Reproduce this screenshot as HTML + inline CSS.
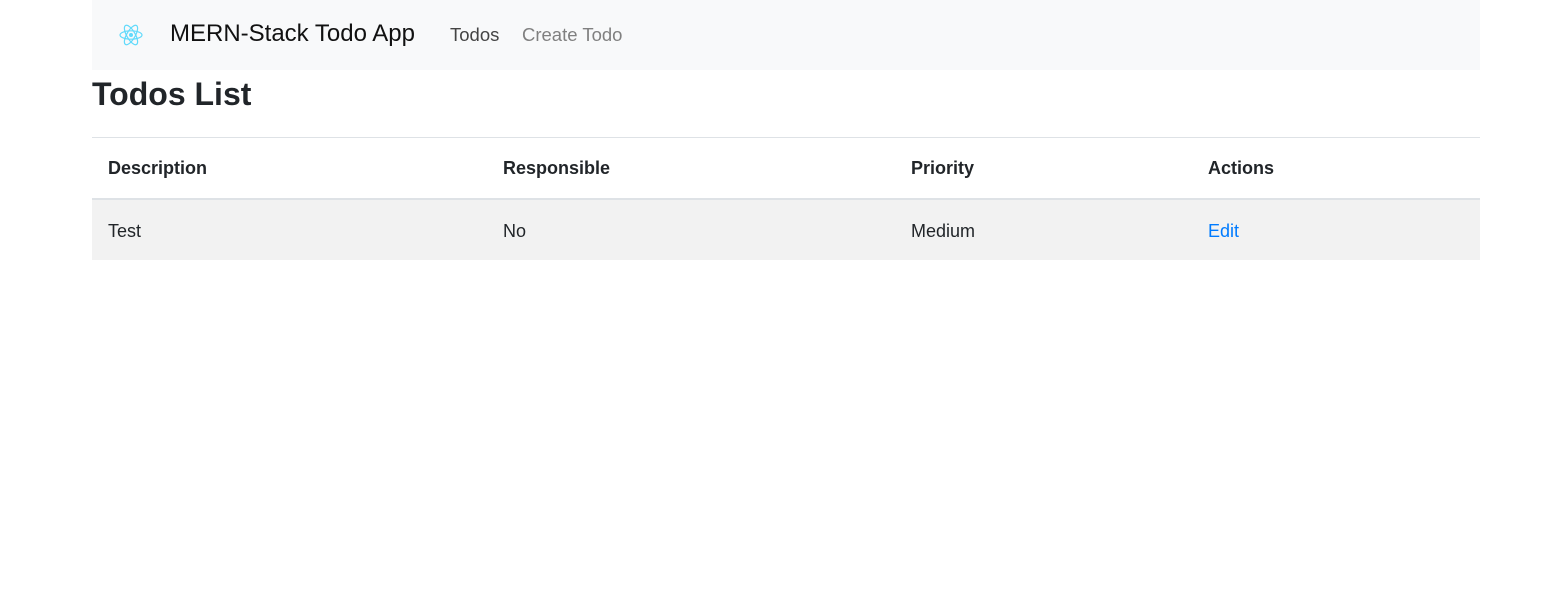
<!DOCTYPE html>
<html><head><style>
body{margin:0;font-family:"Liberation Sans",sans-serif;color:#212529;background:#fff}
.nav{position:absolute;left:92px;top:0;width:1388px;height:70px;background:#f8f9fa}
.brand{position:absolute;left:78px;top:20px;font-size:24px;color:#111;white-space:nowrap}
.l{position:absolute;top:24px;font-size:18.5px;white-space:nowrap}
h1{position:absolute;left:92px;top:72px;margin:0;font-size:32px;font-weight:bold;line-height:44px}
.t{position:absolute;left:92px;top:137px;width:1388px;border-top:1px solid #dee2e6}
.row{position:relative;height:60px;font-size:18px}
.row span{position:absolute;top:21px;white-space:nowrap}
.h{border-bottom:2px solid #dee2e6;font-weight:bold}
.b{background:#f2f2f2}
</style></head><body>
<div class="nav">
<svg style="position:absolute;left:27px;top:23px" width="24" height="24" viewBox="-12 -12 24 24" fill="none" stroke="#61dafb" stroke-width="1.2"><ellipse rx="11" ry="4.2"/><ellipse rx="11" ry="4.2" transform="rotate(60)"/><ellipse rx="11" ry="4.2" transform="rotate(120)"/><circle r="2" fill="#61dafb" stroke="none"/></svg>
<div class="brand">MERN-Stack Todo App</div>
<div class="l" style="left:358px;color:#444">Todos</div>
<div class="l" style="left:430px;color:#808080">Create Todo</div>
</div>
<h1>Todos List</h1>
<div class="t">
<div class="row h"><span style="left:16px;top:20px">Description</span><span style="left:411px;top:20px">Responsible</span><span style="left:819px;top:20px">Priority</span><span style="left:1116px;top:20px">Actions</span></div>
<div class="row b"><span style="left:16px">Test</span><span style="left:411px">No</span><span style="left:819px">Medium</span><span style="left:1116px;color:#007bff">Edit</span></div>
</div>
</body></html>
